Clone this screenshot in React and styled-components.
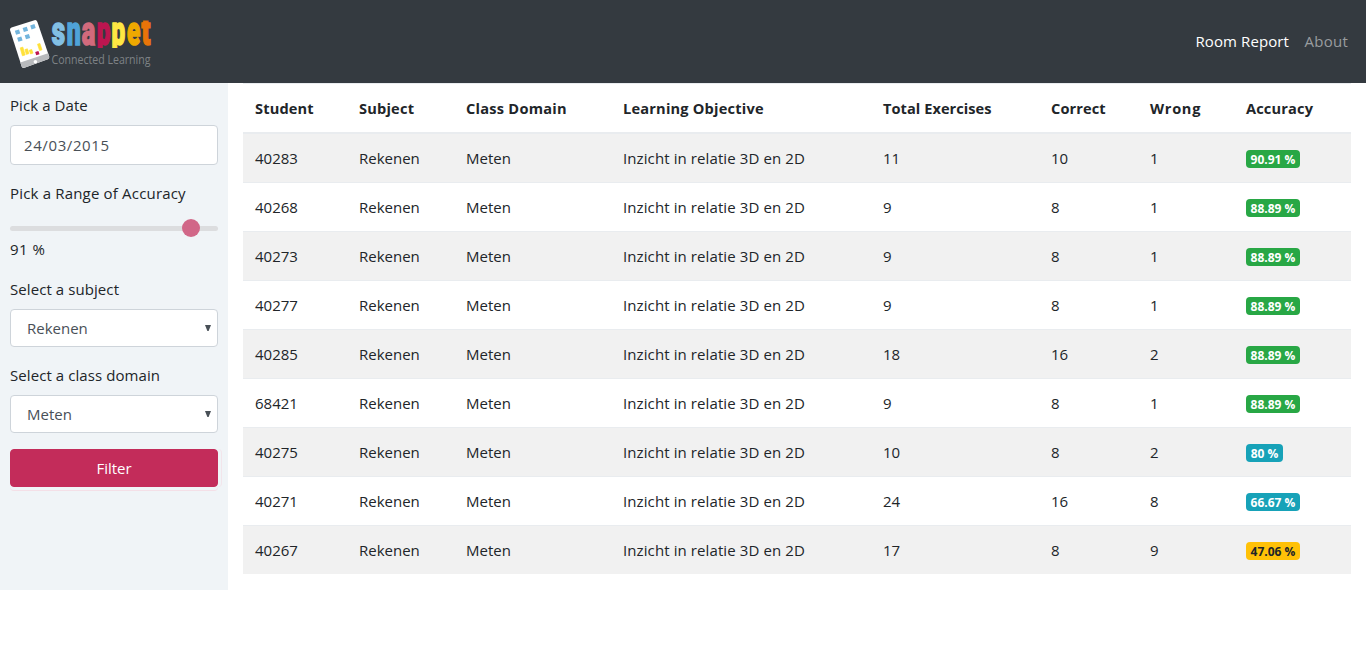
import React, { useState } from "react";
import styled, { createGlobalStyle, css } from "styled-components";

const GlobalStyle = createGlobalStyle`
  *, *::before, *::after { box-sizing: border-box; }
  body {
    margin: 0;
    background: #fff;
    color: #212529;
    font-family: "Open Sans", "Noto Sans", sans-serif;
    font-size: 15px;
    font-weight: 370;
    line-height: 24px;
  }
`;

const Navbar = styled.header`
  display: flex;
  align-items: center;
  justify-content: space-between;
  height: 83px;
  padding: 0 16.5px 0 8px;
  background: #343a40;
`;

const Brand = styled.a`
  display: flex;
  svg { display: block; }
`;

const Nav = styled.nav`
  display: flex;
  gap: 16px;
  padding-bottom: 2px;
`;

const NavLink = styled.a`
  width: ${(p) => p.$width}px;
  letter-spacing: ${(p) => p.$spacing}px;
  white-space: nowrap;
  text-decoration: none;
  color: ${(p) => (p.$active ? "#fff" : "#999c9f")};
`;

const Page = styled.div`
  display: flex;
  align-items: flex-start;
`;

const Sidebar = styled.form`
  flex: 0 0 228px;
  height: 507px;
  padding: 10px;
  background: #f0f4f7;
`;

const Field = styled.div`
  display: flex;
  flex-direction: column;
  margin-bottom: 16px;
`;

const Label = styled.label`
  margin-bottom: 8px;
  white-space: nowrap;
  letter-spacing: ${(p) => p.$spacing || 0.08}px;
`;

const Reading = styled.span`
  letter-spacing: 0.5px;
`;

const control = css`
  display: block;
  width: 100%;
  border: 1px solid #ced4da;
  border-radius: 4px;
  background: #fff;
  color: #495057;
  font: inherit;
  outline: none;
`;

const DateInput = styled.input`
  ${control}
  height: 40px;
  padding: 0 13px;
  letter-spacing: 0.6px;
`;

const SelectWrap = styled.div`
  position: relative;
  svg {
    position: absolute;
    right: 7px;
    top: 16px;
    pointer-events: none;
  }
`;

const Select = styled.select`
  ${control}
  appearance: none;
  height: 38px;
  padding: 0 16px;
`;

const Range = styled.input`
  appearance: none;
  display: block;
  width: 100%;
  height: 24px;
  margin: 0;
  padding-top: 6px;
  background: transparent;
  &::-webkit-slider-runnable-track {
    height: 5px;
    border-radius: 3px;
    background: #dcdddf;
  }
  &::-webkit-slider-thumb {
    appearance: none;
    width: 18px;
    height: 18px;
    margin-top: -7px;
    margin-left: -1px;
    border-radius: 50%;
    background: #d16788;
  }
`;

const FilterButton = styled.button`
  display: block;
  width: 100%;
  height: 38px;
  padding: 0;
  border: 1px solid #c32c5a;
  border-radius: 4px;
  background: #c32c5a;
  box-shadow: 0 3px 0 0 #f0f4f7, 0 4px 0 0 #f4dfe7, 3px 0 0 0 #f0f4f7, 4px 0 0 0 #f2e5eb;
  color: #fff;
  font: inherit;
`;

const Main = styled.main`
  flex: 1;
  padding: 0 15px;
`;

const Table = styled.table`
  width: 100%;
  table-layout: fixed;
  border-collapse: separate;
  border-spacing: 0;
`;

const HeadCell = styled.th`
  width: ${(p) => p.$width}px;
  height: 51px;
  padding: 0 12px;
  border-top: 1px solid #e9ecef;
  border-bottom: 2px solid #e9ecef;
  text-align: left;
  font-weight: 700;
  font-size: 14.6px;
  letter-spacing: ${(p) => p.$spacing}px;
  white-space: nowrap;
`;

const Cell = styled.td`
  height: 49px;
  padding: 0 12px;
  border-top: 1px solid #e9ecef;
  letter-spacing: ${(p) => p.$spacing || 0}px;
  white-space: nowrap;
`;

const Row = styled.tr`
  &:nth-child(odd) { background: #f1f1f1; }
  &:first-child ${Cell} {
    height: 48px;
    border-top: 0;
  }
`;

const tones = {
  success: { bg: "#28a745", fg: "#fff" },
  info: { bg: "#17a2b8", fg: "#fff" },
  warning: { bg: "#ffc107", fg: "#212529" },
};

const Badge = styled.span`
  display: block;
  width: ${(p) => (p.$short ? 37 : 54)}px;
  height: 18px;
  margin-top: 1px;
  border-radius: 4px;
  background: ${(p) => tones[p.$tone].bg};
  color: ${(p) => tones[p.$tone].fg};
  font-size: 12px;
  font-weight: 700;
  letter-spacing: 0;
  line-height: 20px;
  text-align: center;
`;

const letters = [
  ["s", 52.2, 13, "#82bfe4"],
  ["n", 67.7, 12.5, "#4fa3d8"],
  ["a", 82.3, 12.9, "#d26a7c"],
  ["p", 97.7, 12.7, "#bd1550"],
  ["p", 112.4, 12.7, "#fee743"],
  ["e", 127.7, 12.7, "#efa900"],
  ["t", 141.5, 8.7, "#e87409"],
];

// Ink bounds of each glyph at 42px in Roboto Black: [left bearing, ink width]
const ink = {
  s: [0.9, 21],
  n: [1.5, 21],
  a: [1.1, 21.3],
  p: [1.5, 22],
  e: [1.1, 21.8],
  t: [0.2, 14],
};

function Logo() {
  return (
    <svg width="146" height="83" viewBox="8 0 146 83" aria-label="snappet Connected Learning">
      <path d="M11.5 27.5 34.5 20.2q2-.5 2.8 1.5L49.2 56.5q.5 2-1.4 2.8L24.5 67.8q-2 .5-2.8-1.4L10 30q-.3-1.8 1.5-2.5Z" fill="#fff" />
      <path d="m20.3 62.4 27.8-9.2 1.1 3.6q.4 1.8-1.4 2.5l-23.4 8.4q-2 .6-2.7-1.3Z" fill="#b8babd" />
      <circle cx="35.4" cy="61.7" r="1.8" fill="#fff" />
      <g fill="#73b5dd">
        <path d="m14.8 30.8 4.2-1.3 1.3 4-4.2 1.3ZM22.6 28.1l4.2-1.3 1.3 4-4.2 1.3ZM30.2 25.4l4.2-1.3 1.3 4-4.2 1.3ZM17.1 37.8l4.2-1.3 1.3 4-4.2 1.3ZM24.7 35.2l4.2-1.3 1.3 4-4.2 1.3Z" />
      </g>
      <path d="m20.2 47.9 2.6-.8 2.4 7.8-2.8.9ZM24.9 49.6l2.5-.8 1.5 4.8-2.5.8ZM29.2 50.3l2.5-.8 1.3 3.6-2.4.8ZM37.5 44.2l2.4-.8 2.1 6.4-2.4.8Z" fill="#ffe13b" stroke="#ffe13b" strokeWidth=".7" />
      <path d="m35.2 51.9 3.2-1 1.1 3.3-3.3 1Z" fill="#bd1550" />
      <g fontFamily="Roboto, sans-serif" fontWeight="900" fontSize="42">
        {letters.map(([ch, x, w, color], i) => {
          const k = w / ink[ch][1];
          return (
            <text
              key={i}
              transform={`translate(${x - ink[ch][0] * k} 44.6) scale(${k} .97)`}
              fill={color}
              stroke={color}
              strokeWidth="1.6"
              strokeLinejoin="miter"
            >
              {ch}
            </text>
          );
        })}
      </g>
      <path d="M94 47.9h34v7.2H94ZM140 14h13v6.6h-13Z" fill="#343a40" />
      <text x="51.5" y="63.5" textLength="99" lengthAdjust="spacingAndGlyphs" fontFamily='"Open Sans", sans-serif' fontSize="12" fontWeight="450" fill="#7e8286">
        Connected Learning
      </text>
    </svg>
  );
}

const Arrow = () => (
  <svg width="6" height="6" viewBox="0 0 6 6">
    <path d="M0 0h6L3.6 6H2.4Z" fill="#495057" />
  </svg>
);

const columns = [
  ["Student", 104, 0.15],
  ["Subject", 107, 0.2],
  ["Class Domain", 157, 0.25],
  ["Learning Objective", 260, 0.2],
  ["Total Exercises", 168, 0.05],
  ["Correct", 99, 0.1],
  ["Wrong", 96, 0.7],
  ["Accuracy", 117, 0.15],
];

const results = [
  [40283, 11, 10, 1, "90.91", "success"],
  [40268, 9, 8, 1, "88.89", "success"],
  [40273, 9, 8, 1, "88.89", "success"],
  [40277, 9, 8, 1, "88.89", "success"],
  [40285, 18, 16, 2, "88.89", "success"],
  [68421, 9, 8, 1, "88.89", "success"],
  [40275, 10, 8, 2, "80", "info"],
  [40271, 24, 16, 8, "66.67", "info"],
  [40267, 17, 8, 9, "47.06", "warning"],
];

export default function App() {
  const [accuracy, setAccuracy] = useState(91);
  return (
    <>
      <GlobalStyle />
      <Navbar>
        <Brand><Logo /></Brand>
        <Nav>
          <NavLink $active $width={93} $spacing={0.1}>Room Report</NavLink>
          <NavLink $width={45} $spacing={0.3}>About</NavLink>
        </Nav>
      </Navbar>
      <Page>
        <Sidebar onSubmit={(e) => e.preventDefault()}>
          <Field>
            <Label>Pick a Date</Label>
            <DateInput defaultValue="24/03/2015" />
          </Field>
          <Field>
            <Label $spacing={0.18}>Pick a Range of Accuracy</Label>
            <Range type="range" min="0" max="100" value={accuracy} onChange={(e) => setAccuracy(e.target.value)} />
            <Reading>{accuracy} %</Reading>
          </Field>
          <Field>
            <Label>Select a subject</Label>
            <SelectWrap>
              <Select><option>Rekenen</option></Select>
              <Arrow />
            </SelectWrap>
          </Field>
          <Field>
            <Label>Select a class domain</Label>
            <SelectWrap>
              <Select><option>Meten</option></Select>
              <Arrow />
            </SelectWrap>
          </Field>
          <FilterButton>Filter</FilterButton>
        </Sidebar>
        <Main>
          <Table>
            <thead>
              <tr>
                {columns.map(([title, width, spacing]) => (
                  <HeadCell key={title} $width={width} $spacing={spacing}>{title}</HeadCell>
                ))}
              </tr>
            </thead>
            <tbody>
              {results.map(([id, total, correct, wrong, pct, tone]) => (
                <Row key={id}>
                  <Cell>{id}</Cell>
                  <Cell>Rekenen</Cell>
                  <Cell>Meten</Cell>
                  <Cell $spacing={0.1}>Inzicht in relatie 3D en 2D</Cell>
                  <Cell>{total}</Cell>
                  <Cell>{correct}</Cell>
                  <Cell>{wrong}</Cell>
                  <Cell><Badge $tone={tone} $short={pct.length < 3}>{pct} %</Badge></Cell>
                </Row>
              ))}
            </tbody>
          </Table>
        </Main>
      </Page>
    </>
  );
}
